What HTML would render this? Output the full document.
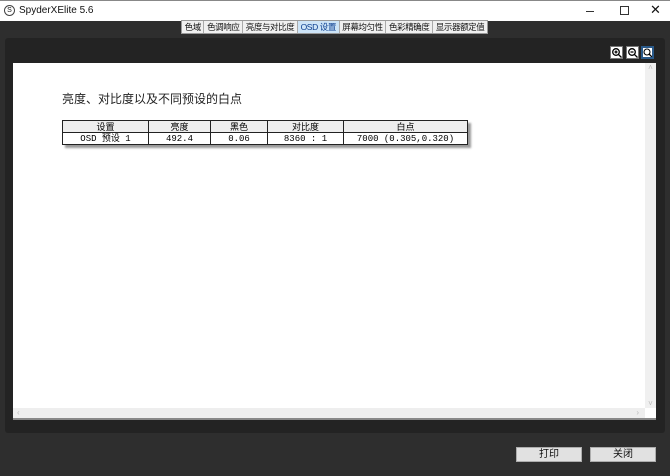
<!DOCTYPE html>
<html><head><meta charset="utf-8"><style>
*{margin:0;padding:0;box-sizing:border-box}
body{width:670px;height:476px;background:#2e2e2e;position:relative;overflow:hidden;font-family:"Liberation Sans","Noto Sans CJK SC",sans-serif}
.title{position:absolute;left:0;top:0;width:670px;height:21px;background:#fff;border-top:1px solid #888;font-size:10px;color:#111}
.tabs{position:absolute;top:20px;left:181px;width:307px;height:14px;display:flex;background:#f0f0f0;border:1px solid #999}
.tab{font-size:8.5px;line-height:13px;padding:0 1px;border-right:1px solid #aaa;color:#111;white-space:nowrap;letter-spacing:-0.4px;flex:auto;text-align:center}
.tab.a{background:#cde4f7;color:#0a3d8f}
.panel{position:absolute;left:5px;top:38px;width:660px;height:395px;background:#232323;border-radius:3px}
.white{position:absolute;left:13px;top:63px;width:643px;height:357px;background:#fff;border-bottom:2px solid #888}
.vs{position:absolute;right:0;top:0;width:11px;height:345px;background:#f0f0f0;color:#bbb;font-size:8px;text-align:center}
.hs{position:absolute;left:0;top:345px;width:632px;height:10px;background:#eee;color:#bbb;font-size:8px}
table{position:absolute;left:49px;top:57px;border-collapse:collapse;font-family:"Liberation Mono","Noto Sans CJK SC",monospace;font-size:9px;box-shadow:3px 3px 2px #999}
td{border:1px solid #222;text-align:center;height:12px;line-height:10px;padding:0}
tr.h td{background:#eee;font-family:"Liberation Sans","Noto Sans CJK SC",sans-serif}
.btn{position:absolute;top:447px;width:66px;height:15px;background:#e1e1e1;border:1px solid #adadad;font-size:10px;text-align:center;line-height:13px;color:#111}
.ic{position:absolute;top:46px;width:13px;height:13px;background:#fff;border:1px solid #777}
.ic svg{position:absolute;left:0;top:0}
</style></head><body>
<div class="title"><span style="position:absolute;left:4px;top:4px;width:11px;height:11px;border:1px solid #444;border-radius:50%;font-size:7px;text-align:center;line-height:9px">S</span><span style="position:absolute;left:19px;top:4px">SpyderXElite 5.6</span>
<span style="position:absolute;left:586px;top:10px;width:8px;border-top:1px solid #333"></span>
<span style="position:absolute;left:620px;top:5px;width:9px;height:9px;border:1px solid #333"></span>
<span style="position:absolute;left:650px;top:1px;font-size:13px">✕</span></div>
<div class="tabs"><div class="tab">色域</div><div class="tab">色调响应</div><div class="tab">亮度与对比度</div><div class="tab a">OSD 设置</div><div class="tab">屏幕均匀性</div><div class="tab">色彩精确度</div><div class="tab" style="border:0">显示器额定值</div></div>
<div class="panel"></div>
<div class="ic" style="left:610px"><svg width="11" height="11"><circle cx="5" cy="5" r="3.3" fill="none" stroke="#000" stroke-width="1.3"/><path d="M7.5 7.5L10.5 10.5M3.5 5H6.5M5 3.5V6.5" stroke="#000" stroke-width="1.3"/></svg></div>
<div class="ic" style="left:626px"><svg width="11" height="11"><circle cx="5" cy="5" r="3.3" fill="none" stroke="#000" stroke-width="1.3"/><path d="M7.5 7.5L10.5 10.5M3.5 5H6.5" stroke="#000" stroke-width="1.3"/></svg></div>
<div class="ic" style="left:641px;border:2px solid #2a5a8a"><svg width="9" height="9"><circle cx="4" cy="4" r="3" fill="none" stroke="#000" stroke-width="1.1"/><path d="M6 6L9 9" stroke="#000" stroke-width="1.3"/></svg></div>
<div class="white">
<div style="position:absolute;left:49px;top:27px;font-size:12px;color:#222">亮度、对比度以及不同预设的白点</div>
<table><tr class="h"><td style="width:86px">设置</td><td style="width:62px">亮度</td><td style="width:57px">黑色</td><td style="width:76px">对比度</td><td style="width:124px">白点</td></tr>
<tr><td>OSD 预设 1</td><td>492.4</td><td>0.06</td><td>8360 : 1</td><td>7000 (0.305,0.320)</td></tr></table>
<div class="vs">˄<div style="position:absolute;bottom:0;width:11px">˅</div></div>
<div class="hs"><span style="position:absolute;left:4px">‹</span><span style="position:absolute;right:6px">›</span></div>
</div>
<div class="btn" style="left:516px">打印</div>
<div class="btn" style="left:590px">关闭</div>
</body></html>
